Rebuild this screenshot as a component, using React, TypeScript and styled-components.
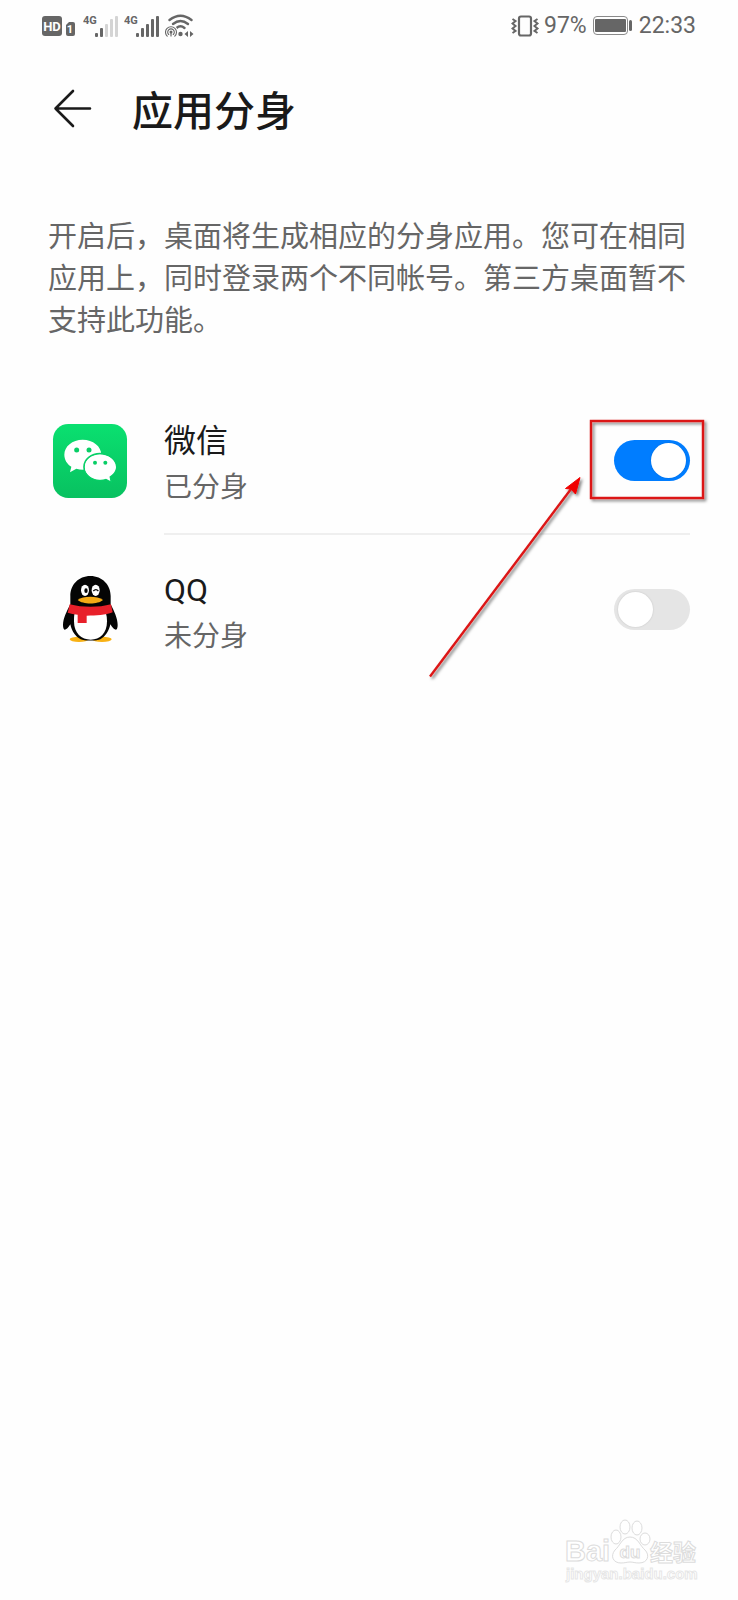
import React, { useState } from "react";
import styled, { createGlobalStyle } from "styled-components";

const GlobalStyle = createGlobalStyle`
  * { box-sizing: border-box; }
  body {
    margin: 0;
    background: #fefefe;
    color: #1a1a1a;
    font-family: Roboto, "Noto Sans CJK SC", sans-serif;
  }
`;

const Screen = styled.div`
  display: flex;
  flex-direction: column;
  min-height: 100vh;
  overflow: hidden;
`;

const StatusBar = styled.div`
  display: flex;
  align-items: center;
  justify-content: space-between;
  height: 52px;
  padding: 0 42px;
  color: #666;
  font-size: 23px;
  line-height: 32px;
`;

const StatusGroup = styled.div<{ $gap: number }>`
  display: flex;
  align-items: center;
  gap: ${(p) => p.$gap}px;

  svg {
    display: block;
    flex: none;
  }
`;

const Header = styled.header`
  display: flex;
  align-items: center;
  gap: 36px;
  padding: 24px 48px;
`;

const BackButton = styled.button`
  width: 48px;
  height: 48px;
  padding: 0;
  border: 0;
  background: none;
  color: #1a1a1a;

  svg {
    display: block;
  }
`;

const Title = styled.h1`
  margin: 0;
  font-family: "Noto Sans CJK SC", sans-serif;
  font-size: 41px;
  font-weight: 500;
  line-height: 64px;
`;

const Description = styled.p`
  margin: 52px 48px 44px;
  color: #666;
  font-size: 29px;
  line-height: 42px;
`;

const AppList = styled.ul`
  margin: 0;
  padding: 0 48px;
  list-style: none;
`;

const AppRow = styled.li`
  display: flex;
  align-items: center;
  gap: 32px;

  & > svg {
    display: block;
    flex: none;
  }
`;

const RowBody = styled.div<{ $divided: boolean }>`
  display: flex;
  flex: 1;
  align-items: center;
  justify-content: space-between;
  height: 149px;
  box-shadow: ${(p) => (p.$divided ? "inset 0 -2px #efefef" : "none")};
`;

const RowLabel = styled.label`
  display: flex;
  flex-direction: column;
`;

const AppName = styled.span`
  font-size: 32px;
  line-height: 48px;
`;

const AppState = styled.span`
  color: #666;
  font-family: "Noto Sans CJK SC", sans-serif;
  font-size: 28px;
  line-height: 40px;
`;

const SwitchSlot = styled.div`
  position: relative;
  display: flex;
`;

const Switch = styled.input`
  appearance: none;
  width: 76px;
  height: 41px;
  margin: 0;
  padding: 3px 4px;
  border-radius: 21px;
  background: #e5e5e5;

  &::before {
    content: "";
    display: block;
    width: 35px;
    height: 35px;
    border-radius: 50%;
    background: #fff;
    box-shadow: 0 0 2px rgba(0, 0, 0, 0.15);
  }

  &:checked {
    background: #007dff;
  }

  &:checked::before {
    margin-left: auto;
  }
`;

const Callout = styled.svg`
  position: absolute;
  top: -26px;
  right: -20px;
  pointer-events: none;
`;

const Footer = styled.footer`
  display: flex;
  justify-content: flex-end;
  margin-top: auto;
  padding: 0 38px 12px;
`;

const Watermark = styled.svg`
  fill: #fff;
  stroke: #dcdcdc;
  stroke-width: 1;

  text {
    font-family: "Liberation Sans", "Noto Sans CJK SC", sans-serif;
    font-weight: 700;
  }
`;

const NetworkTag = styled.text`
  font-family: Roboto, sans-serif;
  font-size: 11px;
  font-weight: 700;
`;

function HdIcon() {
  return (
    <svg width="35" height="22" viewBox="0 0 35 22" fill="#666">
      <rect x="0" y="1" width="20" height="20" rx="3" />
      <text x="10" y="16" textAnchor="middle" fill="#fff" fontSize="13" fontWeight="700">HD</text>
      <path d="M24 10l3-3h4a2 2 0 0 1 2 2v10a2 2 0 0 1-2 2h-5a2 2 0 0 1-2-2z" />
      <text x="28" y="18" textAnchor="middle" fill="#fff" fontSize="11" fontWeight="700">1</text>
    </svg>
  );
}

function SignalIcon({ level }: { level: number }) {
  const heights = [4, 9, 13, 18, 21];
  return (
    <svg width="35" height="24" viewBox="0 0 35 24" fill="#666">
      <NetworkTag x="0" y="10">4G</NetworkTag>
      {heights.map((h, i) => (
        <rect key={h} x={12 + i * 5} y={23 - h} width="3" height={h} rx="1" fill={i < level ? "#666" : "#d4d4d4"} />
      ))}
    </svg>
  );
}

function WifiIcon() {
  return (
    <svg width="30" height="24" viewBox="0 0 30 24" fill="none" stroke="#666" strokeLinecap="round">
      <path d="M4.500 6Q15.500-2.500 26.500 6" strokeWidth="2.400" />
      <path d="M8 10Q15.500 4 23 10" strokeWidth="2.400" />
      <path d="M11.500 14Q15.500 10.500 19.500 14" strokeWidth="2.400" />
      <circle cx="15.500" cy="20" r="2.200" fill="#666" stroke="none" />
      <circle cx="6" cy="18" r="7" fill="#fefefe" stroke="none" />
      <circle cx="6" cy="18" r="1.500" fill="#666" stroke="none" />
      <path d="M3.700 20.500A3.300 3.300 0 1 1 8.300 20.500M2.200 22.200A5.500 5.500 0 1 1 9.800 22.200" strokeWidth="1.100" />
      <path d="M6 18v4" strokeWidth="1.200" />
      <path d="M23 17v6l-3.500-3zM25 17v6l3.500-3z" fill="#666" stroke="none" />
    </svg>
  );
}

function VibrateIcon() {
  return (
    <svg width="29" height="24" viewBox="0 0 29 24" fill="none" stroke="#666">
      <rect x="8" y="2.500" width="12" height="19" rx="2" strokeWidth="2.200" />
      <path d="M1.500 5l3 2-3 2.500 3 2.500-3 2.500 3 2.500-3 2M26.500 5l-3 2 3 2.500-3 2.500 3 2.500-3 2.500 3 2" strokeWidth="2" />
    </svg>
  );
}

function BatteryIcon() {
  return (
    <svg width="40" height="22" viewBox="0 0 40 22" fill="#666">
      <rect x="0.500" y="1.500" width="34" height="18" rx="3.500" fill="#fff" stroke="#8a8a8a" />
      <rect x="2" y="4" width="31" height="13" rx="1" />
      <rect x="36" y="5" width="3" height="11" rx="1.500" />
    </svg>
  );
}

function BackIcon() {
  return (
    <svg width="48" height="48" viewBox="0 0 48 48" fill="none" stroke="currentColor" strokeWidth="2.600" strokeLinecap="round" strokeLinejoin="round">
      <path d="M42 24.500H7.500M25 7L7.500 24.500L25 42" />
    </svg>
  );
}

function WechatIcon() {
  return (
    <svg width="84" height="84" viewBox="24 27 252 252">
      <defs>
        <linearGradient id="wechat-green" x1="0" y1="0" x2="0" y2="1">
          <stop offset="0" stopColor="#0ae070" />
          <stop offset="1" stopColor="#08c160" />
        </linearGradient>
      </defs>
      <rect x="39" y="42" width="222" height="222" rx="46" fill="url(#wechat-green)" />
      <path d="M128 89C97 89 73 109 73 134c0 15 8 28 21 36l-4 17 19-11c6 2 13 3 20 3 30 0 55-20 55-45S159 89 128 89z" fill="#fff" />
      <path d="M180 131c-26 0-48 17-48 40s22 39 48 39c7 0 13-1 18-3l15 7-3-14c11-7 18-17 18-29 0-23-22-40-48-40z" fill="#fff" stroke="#08d068" strokeWidth="5" />
      <path d="M180 134c-25 0-45 16-45 37s20 38 45 38c7 0 13-1 18-3l13 7-3-13c11-7 20-17 20-29 0-21-23-37-48-37z" fill="#fff" />
      <g fill="#08ce66">
        <circle cx="110" cy="120" r="7.500" />
        <circle cx="147" cy="120" r="7.500" />
        <circle cx="165" cy="158" r="6" />
        <circle cx="196" cy="158" r="6" />
      </g>
    </svg>
  );
}

function QqIcon() {
  return (
    <svg width="84" height="84" viewBox="24 24 252 252">
      <ellipse cx="117" cy="238" rx="28" ry="8" fill="#f8b114" />
      <ellipse cx="186" cy="238" rx="29" ry="8" fill="#f8b114" />
      <path d="M151 48c-36 0-60 27-60 60v25c-10 20-22 42-22 62 0 8 2 14 5 14 5 0 11-6 17-16 4 20 15 37 31 45 9 5 50 5 59 0 15-8 26-25 30-45 6 10 12 16 17 16 3 0 5-6 5-14 0-20-11-42-21-62v-25c0-33-25-60-61-60z" fill="#050505" />
      <path d="M104 160h94c2 7 3 15 3 24 0 36-21 55-49 55s-50-19-50-55c0-9 0-17 2-24z" fill="#fff" />
      <path d="M89 133c38 10 87 10 124 0l5 24c-22 9-49 10-78 10v22h-27v-25c-11-1-21-3-30-6z" fill="#e8202a" />
      <ellipse cx="135" cy="91" rx="12" ry="17" fill="#fff" />
      <ellipse cx="167" cy="91" rx="12" ry="17" fill="#fff" />
      <ellipse cx="138" cy="92" rx="5" ry="7" fill="#050505" />
      <path d="M160 93q8-8 15 0" fill="none" stroke="#050505" strokeWidth="4" />
      <path d="M113 120c15-13 60-13 76 0-15 14-61 14-76 0z" fill="#f4a915" />
    </svg>
  );
}

function SwitchCallout() {
  return (
    <Callout width="290" height="270" viewBox="0 0 290 270" aria-hidden="true">
      <defs>
        <filter id="callout-shadow" x="-10%" y="-10%" width="120%" height="120%">
          <feDropShadow dx="2" dy="2" stdDeviation="1.500" floodColor="#000" floodOpacity="0.5" />
        </filter>
      </defs>
      <g filter="url(#callout-shadow)">
        <rect x="171" y="7" width="112" height="77" fill="none" stroke="#dc1414" strokeWidth="2.400" />
        <path d="M10 262.500L151 75" stroke="#dc1414" strokeWidth="2.400" />
        <path d="M160 63.500L155.500 80L151 75L145.500 74.500z" fill="#f00000" stroke="#f00000" />
      </g>
    </Callout>
  );
}

function BaiduWatermark() {
  return (
    <Watermark width="140" height="73" viewBox="0 0 140 73">
      <text x="5" y="46" fontSize="29">Bai</text>
      <ellipse cx="56" cy="22" rx="5" ry="7" />
      <ellipse cx="65" cy="12" rx="5" ry="7" />
      <ellipse cx="77" cy="13" rx="5" ry="7" />
      <ellipse cx="85" cy="24" rx="5" ry="6" />
      <path d="M70 22c-8 0-10 9-15 13-5 6-2 13 6 13 4 0 6-1 9-1s5 1 9 1c9 0 11-8 6-13-5-4-7-13-15-13z" />
      <text x="70" y="43" fontSize="17" textAnchor="middle">du</text>
      <text x="90" y="46" fontSize="23">经验</text>
      <text x="6" y="64" fontSize="15" strokeOpacity="0.7">jingyan.baidu.com</text>
    </Watermark>
  );
}

const apps = [
  { id: "wechat", name: "微信", Icon: WechatIcon, enabled: true },
  { id: "qq", name: "QQ", Icon: QqIcon, enabled: false },
];

export default function App() {
  const [enabled, setEnabled] = useState<Record<string, boolean>>(
    Object.fromEntries(apps.map((a) => [a.id, a.enabled]))
  );

  return (
    <>
      <GlobalStyle />
      <Screen>
        <StatusBar>
          <StatusGroup $gap={6}>
            <HdIcon />
            <SignalIcon level={2} />
            <SignalIcon level={5} />
            <WifiIcon />
          </StatusGroup>
          <StatusGroup $gap={6}>
            <StatusGroup $gap={4}>
              <VibrateIcon />
              <span>97%</span>
            </StatusGroup>
            <BatteryIcon />
            <span>22:33</span>
          </StatusGroup>
        </StatusBar>
        <Header>
          <BackButton type="button" aria-label="返回">
            <BackIcon />
          </BackButton>
          <Title>应用分身</Title>
        </Header>
        <main>
          <Description>
            开启后，桌面将生成相应的分身应用。您可在相同应用上，同时登录两个不同帐号。第三方桌面暂不支持此功能。
          </Description>
          <AppList>
            {apps.map(({ id, name, Icon }, i) => (
              <AppRow key={id}>
                <Icon />
                <RowBody $divided={i < apps.length - 1}>
                  <RowLabel htmlFor={id}>
                    <AppName>{name}</AppName>
                    <AppState>{enabled[id] ? "已分身" : "未分身"}</AppState>
                  </RowLabel>
                  <SwitchSlot>
                    <Switch
                      type="checkbox"
                      role="switch"
                      id={id}
                      checked={enabled[id]}
                      onChange={(e) => setEnabled({ ...enabled, [id]: e.target.checked })}
                    />
                    {id === "wechat" && <SwitchCallout />}
                  </SwitchSlot>
                </RowBody>
              </AppRow>
            ))}
          </AppList>
        </main>
        <Footer>
          <BaiduWatermark />
        </Footer>
      </Screen>
    </>
  );
}
